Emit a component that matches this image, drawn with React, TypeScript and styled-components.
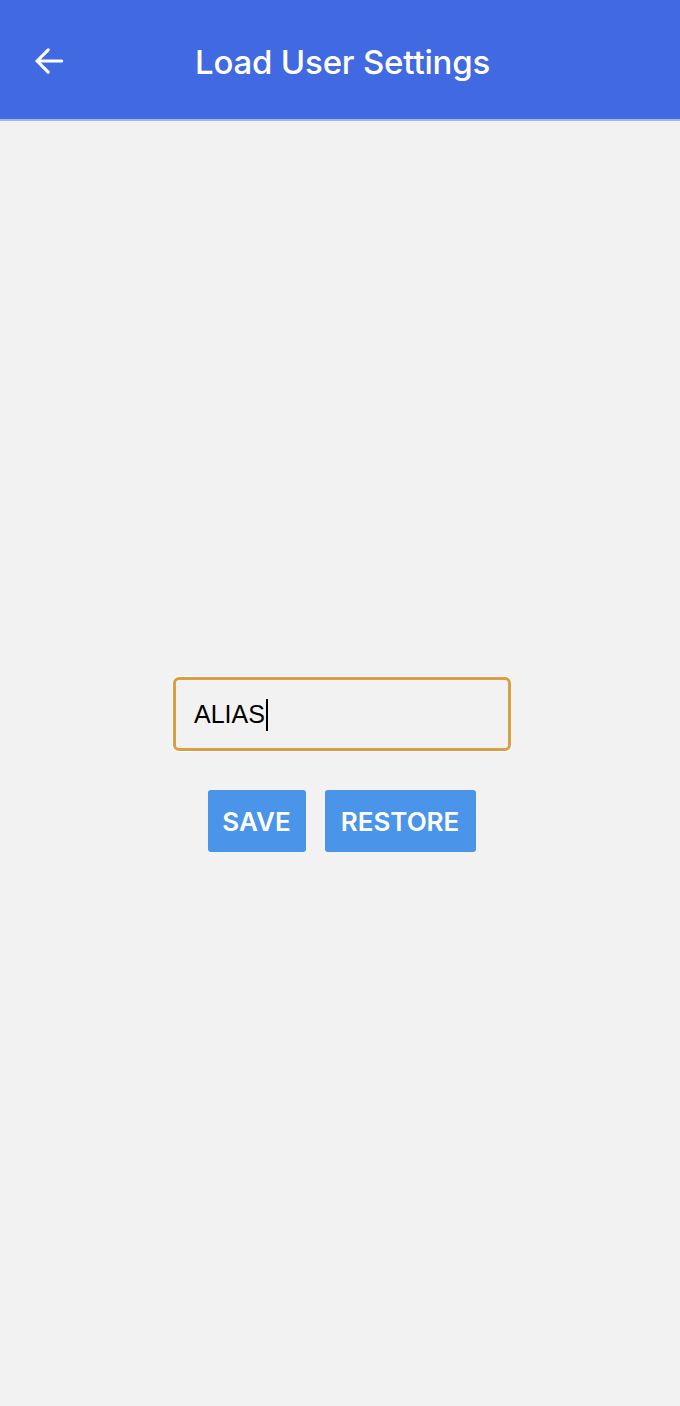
import React from "react";
import styled, { createGlobalStyle } from "styled-components";

const Global = createGlobalStyle`
  html, body { margin: 0; padding: 0; background: #f2f2f2; }
  body { font-family: Inter, Roboto, "Liberation Sans", Arial, sans-serif; }
`;

const Page = styled.div`
  width: 680px;
  height: 1406px;
  display: flex;
  flex-direction: column;
  background: #f2f2f2;
`;

const Header = styled.header`
  height: 119px;
  background: #4169e1;
  border-bottom: 2px solid #a3b6ef;
  display: grid;
  grid-template-columns: 100px 1fr 100px;
  align-items: center;
  color: #fff;
`;

const BackButton = styled.button`
  background: none;
  border: none;
  padding: 0 0 0 30px;
  margin-top: 2px;
  height: 40px;
  display: flex;
  align-items: center;
  color: #fff;
  cursor: pointer;
`;

const Title = styled.h1`
  margin: 0;
  padding-top: 4px;
  text-align: center;
  font-family: Inter, Roboto, "Liberation Sans", Arial, sans-serif;
  font-size: 33px;
  font-weight: 500;
  letter-spacing: -0.2px;
  padding-left: 5px;
`;

const Body = styled.main`
  flex: 1;
  display: flex;
  flex-direction: column;
  align-items: center;
  padding-top: 556px;
`;

const Field = styled.div`
  width: 338px;
  height: 74px;
  margin-left: 4px;
  box-sizing: border-box;
  border: 3px solid #dc9e45;
  border-radius: 6px;
  box-shadow: 0 0 0 1px #ffffff;
  display: flex;
  align-items: center;
  padding-left: 18px;
  font-size: 25px;
  color: #000;
  font-family: "Liberation Sans", Arial, sans-serif;
`;

const Caret = styled.span`
  display: inline-block;
  width: 2px;
  height: 32px;
  background: #000;
  margin-left: 1px;
  margin-top: 2px;
`;

const ButtonRow = styled.div`
  display: flex;
  gap: 19px;
  margin-top: 39px;
  padding-left: 3px;
`;

const ActionButton = styled.button<{ $w: number }>`
  width: ${(p) => p.$w}px;
  height: 62px;
  border: none;
  border-radius: 3px;
  background: #4a94ea;
  color: #fff;
  font-family: Inter, Roboto, "Liberation Sans", Arial, sans-serif;
  font-size: 26px;
  font-weight: 600;
  letter-spacing: 0;
  padding: 0;
  cursor: pointer;
`;

export default function App() {
  return (
    <>
      <Global />
      <Page>
        <Header>
          <BackButton aria-label="back">
            <svg width="38" height="38" viewBox="0 0 24 24" fill="none" stroke="#fff" strokeWidth="2" strokeLinecap="round" strokeLinejoin="round">
              <path d="M20 12H4.5" />
              <path d="M11.5 5L4.5 12l7 7" />
            </svg>
          </BackButton>
          <Title>Load User Settings</Title>
          <div />
        </Header>
        <Body>
          <Field>
            ALIAS<Caret />
          </Field>
          <ButtonRow>
            <ActionButton $w={98}>SAVE</ActionButton>
            <ActionButton $w={151}>RESTORE</ActionButton>
          </ButtonRow>
        </Body>
      </Page>
    </>
  );
}
